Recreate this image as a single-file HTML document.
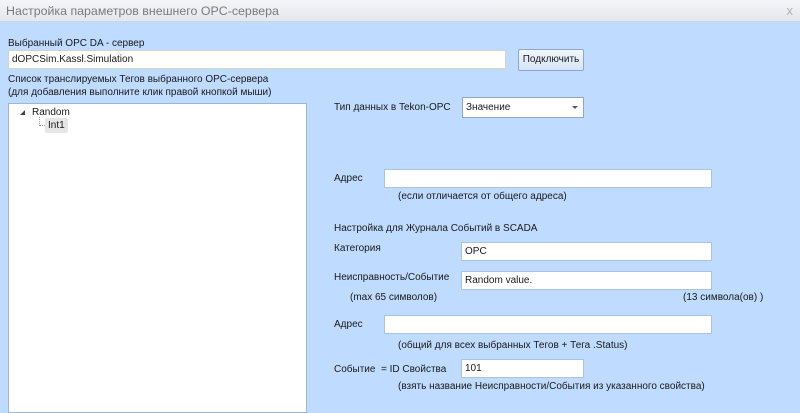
<!DOCTYPE html>
<html><head><meta charset="utf-8"><style>
*{margin:0;padding:0;box-sizing:border-box}
body{width:800px;height:405px;overflow:hidden;background:#bfdbff;font-family:"Liberation Sans","DejaVu Sans",sans-serif;font-size:10px;color:#1a1a1a;position:relative}
.t{position:absolute;white-space:nowrap;line-height:13px}
.in{position:absolute;background:#fff;border:1px solid #a9c3e0;font-size:10px;padding:2px 3px;line-height:13px}
#title{position:absolute;left:0;top:0;width:800px;height:22px;background:linear-gradient(#f4f5f7,#e4e7ec);border-bottom:1px solid #cfd6e0;color:#7a7a7a;font-size:12.4px;padding:4px 6px}
</style></head><body>
<div id="title">Настройка параметров внешнего OPC-сервера<span style="position:absolute;right:7px;top:3px;color:#b0b0b0;font-size:13px">x</span></div>
<div class="t" style="left:8px;top:37px">Выбранный OPC DA - сервер</div>
<div class="in" style="left:8px;top:50px;width:498px;height:19px;border-color:#cfd8c8">dOPCSim.Kassl.Simulation</div>
<div style="position:absolute;left:518px;top:49px;width:66px;height:22px;border:1px solid #8fa8c8;border-radius:2px;background:linear-gradient(#f0f6fd,#d6e5f7);text-align:center;line-height:20px">Подключить</div>
<div class="t" style="left:8px;top:73px">Список транслируемых Тегов выбранного OPC-сервера</div>
<div class="t" style="left:8px;top:86px">(для добавления выполните клик правой кнопкой мыши)</div>
<div style="position:absolute;left:8px;top:103px;width:299px;height:310px;background:#fff;border:1px solid #9bb6d8"></div>
<div style="position:absolute;left:20px;top:110px;width:0;height:0;border-left:5px solid transparent;border-bottom:5px solid #444"></div>
<div class="t" style="left:32px;top:106px">Random</div>
<div style="position:absolute;left:39px;top:117px;width:6px;height:9px;border-left:1px dotted #999;border-bottom:1px dotted #999"></div>
<div class="t" style="left:45px;top:118px;background:#e6e6e6;padding:1px 3px;border-radius:2px">Int1</div>
<div class="t" style="left:334px;top:101px">Тип данных в Tekon-OPC</div>
<div class="in" style="left:462px;top:97px;width:122px;height:21px;border-color:#8fa8c8;padding-top:3px">Значение<span style="position:absolute;right:5px;top:8px;border-left:3px solid transparent;border-right:3px solid transparent;border-top:3px solid #556"></span></div>
<div class="t" style="left:334px;top:172px">Адрес</div>
<div class="in" style="left:384px;top:169px;width:328px;height:19px"></div>
<div class="t" style="left:398px;top:190px">(если отличается от общего адреса)</div>
<div class="t" style="left:334px;top:222px">Настройка для Журнала Событий в SCADA</div>
<div class="t" style="left:334px;top:242px">Категория</div>
<div class="in" style="left:461px;top:242px;width:251px;height:19px">OPC</div>
<div class="t" style="left:334px;top:271px">Неисправность/Событие</div>
<div class="in" style="left:461px;top:271px;width:251px;height:19px">Random value.</div>
<div class="t" style="left:350px;top:291px">(max 65 символов)</div>
<div class="t" style="left:683px;top:291px">(13 символа(ов) )</div>
<div class="t" style="left:334px;top:318px">Адрес</div>
<div class="in" style="left:384px;top:315px;width:328px;height:19px"></div>
<div class="t" style="left:398px;top:339px">(общий для всех выбранных Тегов + Тега .Status)</div>
<div class="t" style="left:334px;top:363px">Событие &nbsp;= ID Свойства</div>
<div class="in" style="left:461px;top:359px;width:123px;height:19px">101</div>
<div class="t" style="left:398px;top:380px">(взять название Неисправности/События из указанного свойства)</div>
</body></html>
